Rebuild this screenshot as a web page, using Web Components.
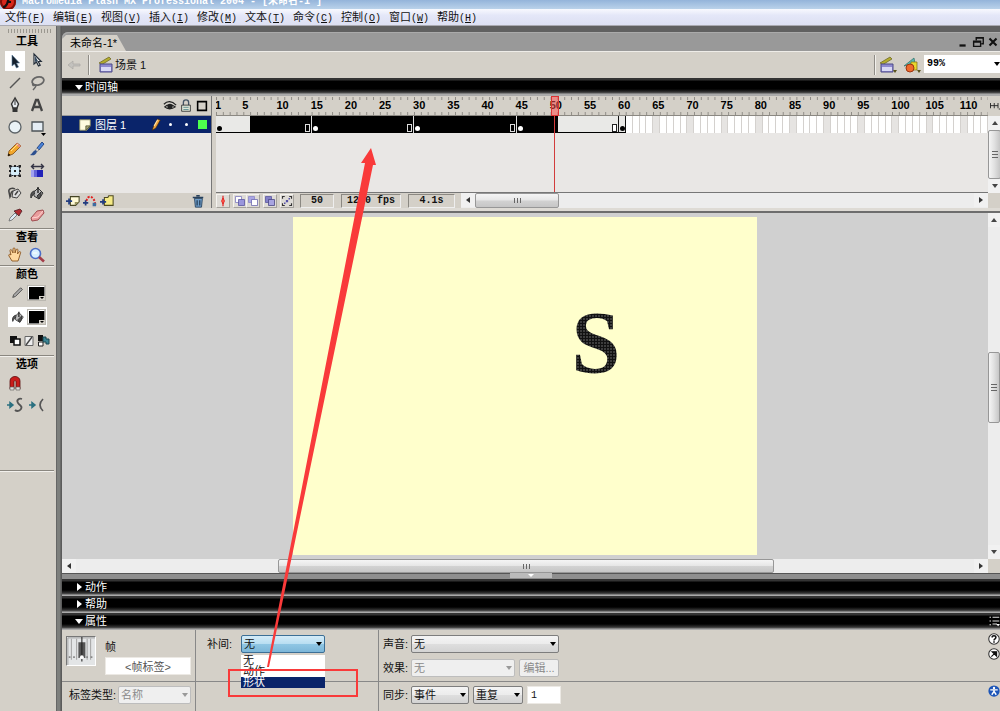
<!DOCTYPE html>
<html lang="zh-CN">
<head>
<meta charset="utf-8">
<title>Macromedia Flash MX Professional 2004</title>
<style>
html, body { margin: 0; height: 100%; overflow: hidden; }
body { font: 11px/16px "Liberation Sans", "Noto Sans CJK SC", sans-serif; color: #111; background: #5f5f5f; }
</style>
</head>
<body>
<flash-app></flash-app>
<script>
const define = (name, html, setup) => {
  const template = document.createElement('template');
  template.innerHTML = html;
  customElements.define(name, class extends HTMLElement {
    constructor() {
      super();
      this.attachShadow({ mode: 'open' }).append(template.content.cloneNode(true));
    }
    connectedCallback() {
      if (setup && !this.ready) { this.ready = true; setup(this, this.shadowRoot); }
    }
  });
};

/* Icons: every drawing sits in a 16 x 16 view box */
const icons = {
  logo: '<circle cx="8" cy="7" r="8" fill="#d8281c"/><circle cx="8" cy="7" r="7" fill="none" stroke="#801008" stroke-width="2"/><path d="M12 2C8 2 8 7 7 9S5 12 3 12M7 7h4" stroke="#111" stroke-width="2.2" fill="none"/>',
  arrow: '<path d="M5 2v11l2.500-2 2 4 2-1-2-4h3z" fill="#16202c" stroke="#55789a" stroke-width=".6"/>',
  subselect: '<path d="M5 1v10l2.500-2 2 4 1.700-.8-2-3.700h3z" fill="#fff" stroke="#222c38" stroke-width="1.200"/><path d="M6 3v6l3-1z" fill="#354b60"/>',
  line: '<path d="M3 13L13 3" stroke="#555" stroke-width="1.500"/>',
  lasso: '<ellipse cx="9" cy="6" rx="6" ry="4" transform="rotate(-15 9 6)" fill="none" stroke="#666" stroke-width="1.800"/><path d="M4 8c-1 2 0 3 2 2s1 2-2 5" fill="none" stroke="#666" stroke-width="1.500"/>',
  pen: '<path d="M8 1L4.500 7 6 11h4l1.500-4z" fill="#e8ecef" stroke="#333" stroke-width="1.400"/><path d="M8 3v5" stroke="#333"/><path d="M5.500 11h5v4h-5z" fill="#333"/>',
  text: '<path d="M3 14L7 3h2l4 11M5 10h6" fill="none" stroke="#444" stroke-width="2.300"/>',
  oval: '<circle cx="8" cy="8" r="6" fill="#e9f2f6" stroke="#5c6367" stroke-width="1.300"/>',
  rect: '<path d="M3 3h11v9H3z" fill="#e4edf4" stroke="#4c5357" stroke-width="1.300"/><path d="M12 14h5l-2.500 3z" fill="#000"/>',
  pencil: '<path d="M1 15l1-5 8-8 4 3-8 8z" fill="#f2a72c" stroke="#7a4a14" stroke-width=".8"/><path d="M10 2l4 3-1.500 1.500-4-3z" fill="#e78b84"/><path d="M4 10L11 3" stroke="#ffe08a"/><path d="M1 15l.5-2.500 2 1.500z" fill="#000"/>',
  brush: '<path d="M8 7l5-6 2 2-5 6z" fill="#4a83d8" stroke="#1e3f80" stroke-width=".9"/><path d="M8 7l2 2-2 1.500L6.500 9z" fill="#ddd" stroke="#555" stroke-width=".5"/><path d="M6.500 9L8 10.500C7 14 4 15 1 14c2-1 3-4 5.500-5z" fill="#2c4f8f"/>',
  transform: '<path d="M3.500 3.500h9v9h-9z" fill="#d4ecf8" stroke="#223" stroke-dasharray="2 1"/><path d="M2 2h2.500v2.500H2zM11.500 2H14v2.500h-2.500zM2 11.500h2.500V14H2zM11.500 11.500H14V14h-2.500zM7 2h2v2H7zM7 12h2v2H7zM2 7h2v2H2zM12 7h2v2h-2zM7 7h2v2H7z" fill="#222"/>',
  fillx: '<path d="M2 7h12v7H2z" fill="#2222b8"/><path d="M2 7h3v7H2z" fill="#a0a0f0"/><path d="M5 7h3v7H5z" fill="#6464d8"/><path d="M3 3.500h11M5 1L2.500 3.500 5 6M12 1l2.500 2.500L12 6" fill="none" stroke="#334" stroke-width="1.400"/>',
  ink: '<path d="M6 6l5-2 3 4-4 5-5-1z" fill="#ddd" stroke="#444"/><path d="M8 4c-3-2-7 0-6 3l1 5c1-2 0-5 3-6M8 10l3-4" fill="none" stroke="#444" stroke-width="1.500"/>',
  bucket: '<path d="M5 7l4-4 5 5-4 6-5-3z" fill="#bbb" stroke="#333"/><path d="M9 8V2" stroke="#222" stroke-width="1.400"/><path d="M6 6C3 6 1 9 2 13c1-2 2-4 4-5M8 11l4-4v4l-2 3z" fill="#555" stroke="#333"/>',
  dropper: '<path d="M2 14l1-3 5-5 2 2-5 5z" fill="#dcebf5" stroke="#666" stroke-width=".8"/><path d="M7 4l5 5 1-2 2-3-2-2-3 1z" fill="#b02c32" stroke="#4d2026" stroke-width=".8"/>',
  eraser: '<path d="M2 11l6-7 6-1 1 3-6 7-6 1z" fill="#e99c9c" stroke="#a04c50"/><path d="M3 11l6-1 5-6" fill="none" stroke="#ffd2cf"/>',
  hand: '<path d="M5 14L2 9c-1-2 1-2 2-1L3 4c0-2 1.500-2 2 0l1 2V2c0-1.500 2-1.500 2 0v4l1-3c.5-1.500 2-1 2 0l-.5 4 1.500-2c1-1 2 0 1.500 1L12 11l-1 3z" fill="#ffd9a0" stroke="#8a5520" stroke-width=".9"/>',
  zoom: '<circle cx="6.500" cy="6.500" r="5" fill="#d8f0ff" stroke="#4a6dc8" stroke-width="1.600"/><path d="M10 10l5 4.500" stroke="#a33c48" stroke-width="2.600"/><path d="M4 6h4" stroke="#fff"/>',
  stroke: '<path d="M2 13l1-3 8-8 2 2-8 8z" fill="#aaa" stroke="#444"/>',
  swap: '<path d="M3 3h7v7H3z" fill="#111"/><path d="M7 6h6v6H7z" fill="#fff" stroke="#111" stroke-width="1.500"/>',
  none: '<path d="M4 3.500h8v9H4z" fill="#eee" stroke="#666"/><path d="M5 12l6-8" stroke="#444" stroke-width="1.400"/>',
  exchange: '<path d="M3 2h5v6H3z" fill="#111"/><path d="M3.500 9H8v4H3.500z" fill="#fff" stroke="#222"/><path d="M8 4h3v2h3v5h-3V9H8z" fill="#3b8594" stroke="#1c4650"/>',
  magnet: '<path d="M3 14V6c0-6 10-6 10 0v8h-4V6.500c0-1-2-1-2 0V14z" fill="#c91c1c" stroke="#5a0d0d" stroke-width=".8"/><path d="M3 12h4v3H3zM9 12h4v3H9z" fill="#ddd" stroke="#555" stroke-width=".6"/>',
  smooth: '<path d="M0 8h5M3 5.500L6 8l-3 2.500z" stroke="#2b7080" fill="#2b7080" stroke-width="1.500"/><path d="M15 2c-3-1-6 1-4 4s5 3 3 6-5 2-6 1" fill="none" stroke="#555" stroke-width="1.800"/>',
  straight: '<path d="M0 8h5M3 5.500L6 8l-3 2.500z" stroke="#2b7080" fill="#2b7080" stroke-width="1.500"/><path d="M14 2C10 6 10 10 14 14" fill="none" stroke="#555" stroke-width="1.700"/>',
  back: '<path d="M2 8l5-4v3h7v2H7v3z" fill="#c4c2be" stroke="#aaa8a4" stroke-width=".7"/>',
  clapper: '<path d="M1 6L11 0l2 2L4 7.500z" fill="#b3ac2e" stroke="#66601c" stroke-width=".7"/><path d="M2 7h12v8H2z" fill="#8f8ad0" stroke="#4c4a88"/><path d="M3 10h10v4H3z" fill="#d9d9f5"/>',
  symbols: '<path d="M1 9L11 1l1 5z" fill="#58b8b0" stroke="#2f6f68" stroke-width=".7"/><path d="M8 5h6v8H8z" fill="#e8d72e" stroke="#7b6d12" stroke-width=".7"/><circle cx="7" cy="11" r="4" fill="#ee6a2c" stroke="#9c3410"/>',
  eye: '<path d="M1 6c4-4 9-4 14 1M2 9c3-3 8-3 12 0-4 3-9 3-12 0z" fill="none" stroke="#222" stroke-width="1.400"/><circle cx="8" cy="8.500" r="3" fill="#222"/>',
  lock: '<path d="M5 8V4c0-4 6-4 6 0v4" fill="none" stroke="#456" stroke-width="1.500"/><path d="M3 7h10v7H3z" fill="#dfe7d8" stroke="#333"/><path d="M5 9.500h6M5 12h6" stroke="#5c8b8d"/>',
  outline: '<path d="M3 3h10v10H3z" fill="none" stroke="#000" stroke-width="1.800"/>',
  page: '<path d="M2 2h12v7l-4 5H2z" fill="#fffbe0" stroke="#8b8b60"/><path d="M9 14V9h5z" fill="#a9a77c" stroke="#555530"/>',
  edit: '<path d="M5 14l1-4 5-9 3 1.500-5 9z" fill="#efa33b" stroke="#40280e" stroke-width=".8"/><path d="M7 9l4-7" stroke="#ffe9b5" stroke-width="1.200"/>',
  addlayer: '<path d="M5 3h10v6l-4 4H5z" fill="#fffbd8" stroke="#444424" stroke-width="1.200"/><path d="M10 13V9h5z" fill="#999560"/><path d="M0 8h7M3.500 5v7" stroke="#223c80" stroke-width="2"/>',
  guide: '<path d="M4 8c1-8 9-6 10 4" fill="none" stroke="#e02020" stroke-width="2.300" stroke-dasharray="2.500 1.500"/><path d="M0 10h6M3 7v6" stroke="#223c80" stroke-width="2"/><path d="M11 10h4v4h-4z" fill="#3c6ca0"/>',
  folder: '<path d="M5 4h4l1-2h5v11H5z" fill="#f5ea86" stroke="#4e4a20" stroke-width="1.200"/><path d="M0 9h7M3.500 6v6" stroke="#223c80" stroke-width="2"/>',
  trash: '<path d="M4 5h9l-1 10H5z" fill="#6d9cc8" stroke="#28415c"/><path d="M2 4h12M6 2h4M7 7v6M10 7v6" stroke="#28415c" stroke-width="1.500"/>',
  center: '<path d="M8 1v14" stroke="#dd1616" stroke-width="1.500"/><path d="M8 4l2 4-2 4-2-4z" fill="#ff5a4e" stroke="#dd1616"/>',
  onion: '<path d="M2 2h8v8H2z" fill="#fff" stroke="#7772bb"/><path d="M6 6h8v8H6z" fill="#9a96dc" stroke="#55519c"/>',
  onionout: '<path d="M2 2h8v8H2z" fill="#aaa6e4" stroke="#8884c4"/><path d="M6 6h8v8H6z" fill="#fff" stroke="#6662ac"/>',
  multi: '<path d="M2 2h8v8H2z" fill="#8480c8" stroke="#55519c"/><path d="M6 6h8v8H6z" fill="#a8a4e0" stroke="#44407e"/>',
  markers: '<path d="M5 2H2v3M2 11v3h3M11 2h3v3M14 11v3h-3" fill="none" stroke="#333" stroke-width="1.500"/><path d="M6.500 6.500h3v3h-3zM10 4h2v2h-2zM4 10h2v2H4z" fill="#5551a8"/>',
  min: '<path d="M4 12h7" stroke="#111" stroke-width="2.600"/>',
  restore: '<path d="M6 6V3h8v7h-2M6 3.500h8M3 7h8v6H3zM3 8h8" fill="none" stroke="#111" stroke-width="1.600"/>',
  close: '<path d="M4 4l8 8M12 4l-8 8" stroke="#111" stroke-width="2.400"/>',
  view: '<path d="M2 4v7M7 4v7M12 4v7M2 7.500h10M13 12h3" stroke="#222" stroke-width="1.200"/>',
  menu: '<path d="M2 3h2M2 8h2M2 13h2M6 3h9M6 8h9M6 12h6" stroke="#ddd" stroke-width="1.600"/><path d="M11 12h5l-2.500 3z" fill="#fff"/>',
  help: '<circle cx="8" cy="8" r="7" fill="#fff" stroke="#333" stroke-width="1.400"/><path d="M5.500 6c0-3 5-3 5 0 0 2-2.500 1.500-2.500 4M8 11v2" fill="none" stroke="#111" stroke-width="2"/>',
  launch: '<circle cx="8" cy="8" r="7" fill="#fff" stroke="#333" stroke-width="1.400"/><path d="M4.500 11.500l5-5M5.500 5h6v6z" fill="#111" stroke="#111" stroke-width="1.500"/>',
  access: '<circle cx="8" cy="8" r="7.500" fill="#1c55b8"/><circle cx="8" cy="4" r="1.600" fill="#fff"/><path d="M3 6.500h10M8 6v3M8 8.500L5 13M8 8.500l3 4.500" stroke="#fff" stroke-width="1.900"/>',
  frame: '<path d="M0 0h16v16H0z" fill="#e3e5e6"/><path d="M.5 16V.5H16M2.500 1v12M5.500 1v12M11.500 1v12M13.500 1v12" fill="none" stroke="#999" stroke-width=".5"/><path d="M6.500 3h4v9h-4z" fill="#555"/><path d="M8.500 0v14" stroke="#222" stroke-width=".6"/><circle cx="8.500" cy="11.500" r="1.100" fill="#fff"/><path d="M1 11.500h5M11 11.500h5" stroke="#888" stroke-dasharray="1 1.500"/>'
};
define('flash-icon', `<style>
  :host { display: block; width: 16px; height: 16px; flex: none; }
  :host([small]) { width: 14px; height: 14px; }
  :host([tiny]) { width: 12px; height: 12px; }
  svg { display: block; width: 100%; height: 100%; overflow: visible; }
</style><svg viewBox="0 0 16 16" aria-hidden="true"></svg>`,
(el, root) => { root.querySelector('svg').innerHTML = icons[el.getAttribute('name')] || ''; });

define('icon-button', `<style>
  :host { display: block; }
  button { display: grid; place-items: center; box-sizing: border-box; width: 100%; height: 100%; margin: 0; padding: 0; border: 0; background: none; }
  :host([selected]) button { background: #fff; }
  :host([raised]) { width: 14px; height: 14px; }
  :host([raised]) button { background: #dedbd6; border: 1px solid; border-color: #f5f3ef #a5a29c #a5a29c #f5f3ef; }
</style><button type="button"><slot></slot></button>`,
(el, root) => root.querySelector('button').setAttribute('aria-label', el.getAttribute('label') || ''));

define('title-bar', `<style>
  :host { display: flex; align-items: flex-start; gap: 6px; height: 9px; overflow: hidden; background: linear-gradient(#94b4da, #bad2ea); color: #fff; font: bold 10px/10px "Liberation Mono", "Noto Sans CJK SC", monospace; white-space: pre; }
  .text { margin-top: -3px; }
  flash-icon { margin-top: -5px; }
</style><flash-icon name="logo"></flash-icon><span class="text"><slot></slot></span>`);

define('menu-bar', `<style>
  :host { display: flex; height: 16px; padding-left: 1px; background: linear-gradient(#f8f9fe, #e4e7f8 40%, #dde0f2); border-bottom: 1px solid #a9a9b0; }
  button { width: 48px; padding: 0 0 0 4px; border: 0; background: none; text-align: left; color: #111; font: 11px/16px "Liberation Sans", "Noto Sans CJK SC", sans-serif; white-space: nowrap; }
  span { font: 10px/16px "Liberation Mono", monospace; }
</style>`,
(el, root) => {
  for (const entry of '文件F 编辑E 视图V 插入I 修改M 文本T 命令C 控制O 窗口W 帮助H'.split(' ')) {
    const b = document.createElement('button');
    b.innerHTML = `${entry.slice(0, 2)}<span>(<u>${entry[2]}</u>)</span>`;
    root.append(b);
  }
});

define('color-well', `<style>
  :host { display: grid; grid-template-columns: 20px 18px; height: 20px; width: 39px; margin-left: 8px; align-items: center; }
  :host([selected]) { background: #fff; }
  flash-icon { justify-self: center; }
  button { position: relative; box-sizing: border-box; width: 17px; height: 14px; padding: 0; background: #000; border: 1px solid; border-color: #fff #888 #888 #fff; outline: 1px solid #bbb8b0; }
  button::after { content: ""; position: absolute; right: 0; bottom: 0; border: 2px solid #d4d0c8; border-top-color: #000; border-bottom-width: 0; box-shadow: 0 0 0 1px #d4d0c8; }
</style><flash-icon small></flash-icon><button type="button"></button>`,
(el, root) => {
  const icon = document.createElement('flash-icon');
  icon.setAttribute('small', '');
  icon.setAttribute('name', el.getAttribute('icon'));
  root.querySelector('flash-icon').replaceWith(icon);
  root.querySelector('button').setAttribute('aria-label', el.getAttribute('label'));
});

define('tool-section', `<style>
  :host { display: block; border-top: 1px solid #8a8780; box-shadow: inset 0 1px #f2f0ec; padding-top: 1px; }
  :host([first]) { border: 0; box-shadow: none; padding: 0; }
  h2 { margin: 0; text-align: center; font: bold 11px/15px "Liberation Sans", "Noto Sans CJK SC", sans-serif; color: #000; }
</style><h2></h2><slot></slot>`,
(el, root) => root.querySelector('h2').textContent = el.getAttribute('heading'));

define('tool-panel', `<style>
  :host { display: block; box-sizing: border-box; width: 56px; flex: none; padding: 3px 2px 0 0; background: #d4d0c8; }
  .grip { height: 4px; margin: 0 3px 1px 7px; background: radial-gradient(#9a978f 1px, transparent 1px) 0 0 / 3px 2px; }
  .grid { display: grid; grid-template-columns: 20px 20px; grid-auto-rows: 20px; column-gap: 2px; row-gap: 2px; margin-left: 5px; }
  .tools { padding-top: 2px; padding-bottom: 3px; }
  .wells { display: grid; gap: 4px; padding-top: 1px; padding-bottom: 4px; }
  .mini { display: grid; grid-template-columns: repeat(3, 14px); height: 20px; margin-left: 7px; }
  .options { padding-bottom: 55px; padding-top: 1px; }
  .end { border-top: 1px solid #8a8780; border-bottom: 1px solid #f2f0ec; }
</style>
<div class="grip"></div>
<tool-section first heading="工具"><div class="grid tools"></div></tool-section>
<tool-section heading="查看"><div class="grid">
  <icon-button label="手形"><flash-icon name="hand"></flash-icon></icon-button>
  <icon-button label="缩放"><flash-icon name="zoom"></flash-icon></icon-button></div></tool-section>
<tool-section heading="颜色"><div class="wells">
  <color-well icon="stroke" label="笔触颜色"></color-well>
  <color-well icon="bucket" label="填充颜色" selected></color-well>
  <div class="mini">
    <icon-button label="黑白"><flash-icon name="swap"></flash-icon></icon-button>
    <icon-button label="没有颜色"><flash-icon name="none"></flash-icon></icon-button>
    <icon-button label="交换颜色"><flash-icon name="exchange"></flash-icon></icon-button>
  </div></div></tool-section>
<tool-section heading="选项"><div class="grid options">
  <icon-button label="贴紧"><flash-icon name="magnet"></flash-icon></icon-button><span></span>
  <icon-button label="平滑"><flash-icon name="smooth"></flash-icon></icon-button>
  <icon-button label="伸直"><flash-icon name="straight"></flash-icon></icon-button></div></tool-section>
<div class="end"></div>`,
(el, root) => {
  root.querySelector('.tools').innerHTML =
    'arrow subselect line lasso pen text oval rect pencil brush transform fillx ink bucket dropper eraser'.split(' ')
      .map((n, i) => `<icon-button label="${n}"${i ? '' : ' selected'}><flash-icon name="${n}"></flash-icon></icon-button>`).join('');
});

define('doc-tabs', `<style>
  :host { display: flex; align-items: flex-end; height: 19px; background: #999; border-radius: 6px 0 0 0; box-shadow: inset 1px 1px #aaa; }
  .tab { flex: none; width: 56px; height: 16px; padding: 0 0 0 8px; box-sizing: content-box; border: 0; background: #d4d0c8; clip-path: polygon(0 4px, 4px 0, 55px 0, 64px 100%, 0 100%); text-align: left; font: 11px/16px "Liberation Sans", "Noto Sans CJK SC", sans-serif; white-space: nowrap; }
  .controls { display: flex; gap: 1px; margin: 0 0 2px auto; }
</style><button class="tab">未命名-1*</button>
<div class="controls"><icon-button label="最小化"><flash-icon small name="min"></flash-icon></icon-button><icon-button label="还原"><flash-icon small name="restore"></flash-icon></icon-button><icon-button label="关闭"><flash-icon small name="close"></flash-icon></icon-button></div>`);

define('drop-down', `<style>
  :host { display: flex; align-items: center; position: relative; }
  .box { position: relative; flex: 1; min-width: 0; }
  select { display: block; box-sizing: border-box; width: 100%; height: 18px; margin: 0; padding: 0 2px; appearance: none; border: 1px solid #7d7d7d; border-radius: 2px; background: linear-gradient(#f4f4f4, #ececec 48%, #dedede 52%, #d3d3d3); color: #111; font: 11px/16px "Liberation Sans", "Noto Sans CJK SC", sans-serif; opacity: 1; }
  .box::after { content: ""; position: absolute; right: 3px; top: 7px; border: 3px solid transparent; border-top: 4px solid #000; border-bottom: 0; pointer-events: none; }
  :host([open]) select { border-color: #3c6f96; background: linear-gradient(#d5ecf8, #b8def2 48%, #8fc6e4 52%, #7cb6d8); }
  :host([disabled]) select { border-color: #bdbdbd; background: #efefef; color: #8a8a8a; }
  :host([disabled]) .box::after { border-top-color: #999; }
  :host([plain]) select { border-color: #fff; background: #fff; font: bold 10px/16px "Liberation Mono", monospace; border-radius: 0; color: #000; }
  :host([plain]) .box::after { right: 0; }
</style><div class="box"><select></select></div><slot></slot>`,
(el, root) => {
  const s = root.querySelector('select');
  s.disabled = el.hasAttribute('disabled');
  s.setAttribute('aria-label', el.getAttribute('name') || '');
  for (const o of el.getAttribute('options').split(',')) s.add(new Option(o));
});

define('scene-bar', `<style>
  :host { display: flex; align-items: center; height: 26px; padding-left: 4px; background: #d4d0c8; border-top: 1px solid #eeece8; }
  .rule { width: 1px; height: 20px; margin: 0 9px 0 6px; background: #8f8c86; box-shadow: 1px 0 #f2f0ec; }
  .scene { margin-left: 1px; }
  .right { display: flex; align-items: center; margin-left: auto; gap: 8px; }
  .right .rule { margin: 0 -4px 0 0; }
  .pick { position: relative; }
  .pick::after { content: ""; position: absolute; right: -2px; bottom: 0; border: 2px solid transparent; border-top: 3px solid #5a531b; border-bottom: 0; }
  drop-down { width: 76px; margin-left: -3px; margin-bottom: 2px; }
</style>
<icon-button label="返回"><flash-icon name="back"></flash-icon></icon-button><div class="rule"></div>
<flash-icon name="clapper"></flash-icon><span class="scene">场景 1</span>
<div class="right"><div class="rule"></div><icon-button class="pick" label="编辑场景"><flash-icon name="clapper"></flash-icon></icon-button>
<icon-button class="pick" label="编辑元件"><flash-icon name="symbols"></flash-icon></icon-button>
<drop-down plain name="显示比例" options="99%"></drop-down></div>`);

define('panel-header', `<style>
  :host { display: flex; align-items: center; box-sizing: border-box; height: 17px; padding: 0 0 1px 13px; background: linear-gradient(#333 0, #333 2px, #000 3px, #000 11px, #333 14px, #555 15px, #aaa 16px); color: #fff; }
  :host([tall]) { height: 18px; padding-bottom: 0; }
  button { display: flex; align-items: center; gap: 2px; padding: 0; border: 0; background: none; color: #fff; font: 11px/16px "Liberation Sans", "Noto Sans CJK SC", sans-serif; }
  i { border: 4px solid transparent; border-left: 5px solid #fff; border-right: 0; margin-left: 2px; margin-right: 1px; }
  :host([open]) i { border: 4px solid transparent; border-top: 5px solid #fff; border-bottom: 0; margin-left: 0; margin-right: 0; }
  slot { display: block; margin-left: auto; }
</style><button type="button"><i></i><span></span></button><slot></slot>`,
(el, root) => root.querySelector('span').textContent = el.getAttribute('heading'));

define('scroll-bar', `<style>
  :host { display: flex; min-width: 0; min-height: 0; background: #ededed; }
  :host([vertical]) { flex-direction: column; }
  button { flex: none; display: grid; place-items: center; width: 14px; height: 14px; padding: 0; border: 0; background: #f1f1f1; }
  :host([vertical]) button { width: 100%; }
  button::before { content: ""; border: 3px solid transparent; border-left: 4px solid #333; border-right: 0; }
  button.back::before { transform: rotate(180deg); }
  :host([vertical]) button::before { border: 3px solid transparent; border-top: 4px solid #444; border-bottom: 0; }
  .thumb { display: grid; place-items: center; box-sizing: border-box; border: 1px solid #979797; border-radius: 2px; background: linear-gradient(#f5f5f5, #e6e6e6 48%, #d2d2d2 52%, #c6c6c6); }
  :host([vertical]) .thumb { background: linear-gradient(90deg, #f5f5f5, #e0e0e0 50%, #c6c6c6); }
  .thumb::before { content: ""; width: 7px; height: 5px; background: repeating-linear-gradient(90deg, #666 0 1px, transparent 1px 3px); }
  :host([vertical]) .thumb::before { width: 6px; height: 7px; background: repeating-linear-gradient(#666 0 1px, transparent 1px 3px); }
</style><button class="back" aria-label="后退"></button><div class="pre"></div><div class="thumb"></div><div class="post"></div><button aria-label="前进"></button>`,
(el, root) => {
  const parts = el.getAttribute('parts').split(' ');
  ['pre', 'thumb', 'post'].forEach((c, i) => root.querySelector('.' + c).style.flex = parts[i] + ' 1 0');
});

define('layer-list', `<style>
  :host { display: grid; grid-template-rows: 20px 17px 1fr 15px; background: #e9e7e5; border-right: 1px solid #777; }
  .head, .foot { display: flex; align-items: center; background: #d4d0c8; }
  .head { justify-content: flex-end; gap: 2px; padding-right: 2px; border-bottom: 1px solid #999; }
  .layer { display: flex; align-items: center; background: #0a246a; color: #fff; padding: 0 4px 0 16px; }
  .layer .name { flex: 1; margin-left: 3px; }
  .dot { width: 3px; height: 3px; border-radius: 2px; background: #fff; margin-left: 7px; margin-right: 6px; }
  .chip { width: 9px; height: 9px; margin-left: 4px; background: #4dff4d; }
  .foot { gap: 3px; padding: 0 6px 0 4px; }
  .foot :last-child { margin-left: auto; }
</style>
<div class="head"><flash-icon small name="eye"></flash-icon><flash-icon small name="lock"></flash-icon><flash-icon small name="outline"></flash-icon></div>
<div class="layer"><flash-icon small name="page"></flash-icon><span class="name">图层 1</span><flash-icon small name="edit"></flash-icon><span class="dot"></span><span class="dot"></span><span class="chip"></span></div>
<div></div>
<div class="foot"><icon-button label="插入图层"><flash-icon small name="addlayer"></flash-icon></icon-button><icon-button label="添加引导层"><flash-icon small name="guide"></flash-icon></icon-button><icon-button label="插入文件夹"><flash-icon small name="folder"></flash-icon></icon-button><icon-button label="删除图层"><flash-icon small name="trash"></flash-icon></icon-button></div>`);

/* Ruler and frames share a grid of 113 equal frame columns */
define('frame-grid', `<style>
  :host { display: grid; grid-template-rows: 20px 17px 1fr; position: relative; min-width: 0; overflow: hidden; background: #e9e7e5; }
  .cols { display: grid; grid-template-columns: repeat(113, minmax(0, 1fr)); grid-auto-flow: column; }
  .ruler { border-bottom: 1px solid #8b8882; background: linear-gradient(90deg, #8f8c86 1px, transparent 1px) 0 1px / calc(100% / 113) 3px repeat-x, linear-gradient(90deg, #8f8c86 1px, transparent 1px) 0 100% / calc(100% / 113) 3px repeat-x, #d4d0c8; }
  .ruler span { grid-row: 1; margin-left: -1px; width: 20px; font: bold 11px/19px "Liberation Sans", sans-serif; color: #000; }
  .cell { background: #fff; border-right: 1px solid #d4d1ce; grid-row: 1; }
  .cell.five { background: #e6e4e2; }
  .span { position: relative; grid-row: 1; background: #e9e9e7; border-bottom: 1px solid #000; }
  .black { background: #000; }
  .key::before { content: ""; position: absolute; left: 1px; bottom: 1px; width: 5px; height: 5px; border-radius: 3px; background: #000; }
  .black.key::before { background: #fff; }
  .edge { box-shadow: -1px 0 #ddd; }
  .end::after { content: ""; position: absolute; right: 2px; bottom: 0; width: 3px; height: 6px; border: 1px solid #ddd; }
  .light.end::after { border-color: #222; background: #fff; }
  .last { box-shadow: -1px 0 #111, inset -1px 0 #111; }
  .playhead { position: absolute; inset: 0; pointer-events: none; grid-template-rows: 20px 1fr; }
  .playhead b { grid-column: 50; grid-row: 1; margin-right: -1px; border: 1px solid #d33; background: #ff505088; box-sizing: border-box; }
  .playhead i { grid-column: 50; grid-row: 2; margin-left: 3px; width: 1px; background: #d23c3c; }
</style><div class="cols ruler"></div><div class="cols frames"></div><div></div><div class="cols playhead"><b></b><i></i></div>`,
(el, root) => {
  const ruler = root.querySelector('.ruler'), frames = root.querySelector('.frames');
  for (const n of [1, ...Array.from({ length: 22 }, (_, i) => (i + 1) * 5)])
    ruler.insertAdjacentHTML('beforeend', `<span style="grid-column:${n}">${n}</span>`);
  const spans = [[1, 6, 'key'], [6, 15, 'black end'], [15, 30, 'black key end edge'], [30, 45, 'black key end edge'],
    [45, 51, 'black key edge'], [51, 60, 'light end'], [60, 61, 'key last']];
  for (const [a, b, c] of spans)
    frames.insertAdjacentHTML('beforeend', `<div class="span ${c}" style="grid-column:${a}/${b}"></div>`);
  for (let n = 61; n <= 113; n++)
    frames.insertAdjacentHTML('beforeend', `<div class="cell${n % 5 ? '' : ' five'}" style="grid-column:${n}"></div>`);
});

define('time-line', `<style>
  :host { display: grid; grid-template-columns: 150px minmax(0, 1fr) 12px; grid-template-rows: 97px 15px; background: #d4d0c8; border-bottom: 3px solid #dedbd5; box-shadow: 0 2px #6d6d6d; margin-bottom: 2px; }
  layer-list { grid-row: 1 / 3; }
  frame-grid { margin-left: 4px; border-bottom: 1px solid #777; }
  .side { display: grid; grid-template-rows: 20px 1fr; }
  .side > flash-icon { margin: 4px 0 0 1px; }
  .foot { grid-column: 2 / 3; display: flex; align-items: center; padding-left: 4px; }
  .foot icon-button { margin-right: -1px; }
  .foot .gap { margin-left: 4px; }
  output { box-sizing: border-box; height: 14px; margin-left: 7px; border: 1px solid; border-color: #8b8882 #eee #eee #8b8882; text-align: center; font: bold 10px/12px "Liberation Mono", monospace; color: #111; white-space: pre; }
  .a { width: 34px; } .b { width: 60px; } .c { width: 47px; }
  .foot scroll-bar { flex: 1; align-self: stretch; margin-left: 6px; }
</style>
<layer-list></layer-list><frame-grid></frame-grid>
<div class="side"><flash-icon tiny name="view"></flash-icon><scroll-bar vertical parts="0 1 0"></scroll-bar></div>
<div class="foot"><icon-button raised label="滚动到播放头"><flash-icon tiny name="center"></flash-icon></icon-button>
<icon-button class="gap" raised label="绘图纸外观"><flash-icon tiny name="onion"></flash-icon></icon-button><icon-button raised label="绘图纸外观轮廓"><flash-icon tiny name="onionout"></flash-icon></icon-button>
<icon-button class="gap" raised label="编辑多个帧"><flash-icon tiny name="multi"></flash-icon></icon-button>
<icon-button class="gap" raised label="修改绘图纸标记"><flash-icon tiny name="markers"></flash-icon></icon-button>
<output class="a">50</output><output class="b">12.0 fps</output><output class="c">4.1s</output>
<scroll-bar parts="0 82 415"></scroll-bar></div>`);

define('stage-area', `<style>
  :host { display: grid; grid-template-columns: minmax(0, 1fr) 12px; grid-template-rows: minmax(0, 1fr) 14px; background: #d4d0c8; }
  .paste { display: grid; place-items: center; background: #d0d0d0; overflow: hidden; }
  .canvas { position: relative; width: 464px; height: 338px; background: #ffffcc; }
  .glyph { position: absolute; left: 60%; top: 22%; padding-top: 2px; font: bold 88px/100px "Liberation Serif", serif; color: transparent; background: radial-gradient(circle at 1px 1px, #a5a5a5 0, #111 1px) 0 0 / 3px 3px; -webkit-background-clip: text; background-clip: text; }
</style><div class="paste"><div class="canvas"><span class="glyph">S</span></div></div>
<scroll-bar vertical parts="125 68 122"></scroll-bar><scroll-bar parts="202 494 200"></scroll-bar>`);

define('splitter-bar', `<style>
  :host { display: flex; justify-content: center; height: 6px; background: linear-gradient(#555 1px, #8e8e8e 1px); }
  button { display: grid; place-items: center; width: 42px; height: 5px; padding: 0; border: 0; background: #bbb; }
  button::before { content: ""; border: 3px solid transparent; border-top: 3px solid #fff; border-bottom: 0; }
</style><button aria-label="折叠面板"></button>`);

define('option-list', `<style>
  :host { display: block; background: #fff; }
  ul { margin: 0; padding: 0; list-style: none; }
  li { height: 11px; padding-left: 2px; font: 11px/11px "Liberation Sans", "Noto Sans CJK SC", sans-serif; }
  li[aria-selected=true] { background: #0a246a; color: #fff; }
</style><ul role="listbox" aria-label="补间"><li role="option">无</li><li role="option">动作</li><li role="option" aria-selected="true">形状</li></ul>`);

define('property-panel', `<style>
  :host { display: grid; grid-template-columns: 134px 183px minmax(0, 1fr) 12px; grid-template-rows: 51px 30px; background: #d4d0c8; }
  .cell { display: flex; flex-direction: column; gap: 6px; box-sizing: border-box; min-width: 0; padding: 5px 4px 0; border-right: 1px solid #888; }
  .cell.low { border-top: 1px solid #888; padding-top: 4px; }
  .cell.open { border-right: 0; }
  .cell.icons { padding: 3px 0 0; gap: 3px; }
  .frame { flex-direction: row; gap: 9px; }
  .frame flash-icon { width: 30px; height: 30px; margin-top: 1px; border: 1px solid; border-color: #777 #fff #fff #777; box-sizing: border-box; }
  .frame div { flex: 1; display: grid; gap: 2px; margin-top: 4px; align-content: start; }
  .row { display: flex; gap: 4px; }
  input, .edit { box-sizing: border-box; height: 18px; margin: 0; padding: 0 3px; border: 1px solid #ece9e4; background: #fff; font: 11px/16px "Liberation Sans", "Noto Sans CJK SC", sans-serif; color: #111; min-width: 0; }
  .name { width: 86px; text-align: center; color: #555; }
  .loop { width: 34px; font: 10px/16px "Liberation Mono", monospace; }
  .edit { width: 40px; border: 1px solid #b8b8b8; border-radius: 2px; background: #efefef; color: #8a8a8a; white-space: nowrap; }
  .lab { width: 24px; line-height: 18px; flex: none; white-space: nowrap; }
  .lab.type { width: 48px; margin-left: 3px; margin-right: -3px; }
  .lab.t { width: 30px; margin-left: 7px; }
  .w84 { width: 84px; } .w148 { width: 148px; } .w104 { width: 104px; } .w58 { width: 58px; } .w50 { width: 50px; } .w74 { width: 74px; }
  option-list { position: absolute; left: 0; top: 20px; width: 84px; z-index: 1; }
</style>
<div class="cell frame"><flash-icon name="frame"></flash-icon><div><label for="fl">帧</label><input id="fl" class="name" value="&lt;帧标签&gt;"></div></div>
<div class="cell"><div class="row"><span class="lab t">补间:</span><drop-down class="w84" open name="补间" options="无,动作,形状"><option-list></option-list></drop-down></div></div>
<div class="cell open"><div class="row"><span class="lab">声音:</span><drop-down class="w148" name="声音" options="无"></drop-down></div>
<div class="row"><span class="lab">效果:</span><drop-down class="w104" disabled name="效果" options="无"></drop-down><button class="edit" disabled>编辑...</button></div></div>
<div class="cell open icons"><icon-button label="帮助"><flash-icon tiny name="help"></flash-icon></icon-button><icon-button label="编辑"><flash-icon tiny name="launch"></flash-icon></icon-button></div>
<div class="cell low"><div class="row"><span class="lab type">标签类型:</span><drop-down class="w74" disabled name="标签类型" options="名称"></drop-down></div></div>
<div class="cell low"></div>
<div class="cell low open"><div class="row"><span class="lab">同步:</span><drop-down class="w58" name="同步" options="事件"></drop-down><drop-down class="w50" name="循环" options="重复"></drop-down><input class="loop" aria-label="循环次数" value="1"></div></div>
<div class="cell low open icons"><icon-button label="辅助功能"><flash-icon tiny name="access"></flash-icon></icon-button></div>`);

/* Red marker strokes drawn over the workspace */
define('markup-layer', `<style>
  :host { display: block; position: absolute; inset: 0; overflow: hidden; pointer-events: none; z-index: 5; }
  svg { display: block; width: 100%; height: 100%; }
</style><svg aria-hidden="true"><path d="M371 148L361 163L365 163L267 667L269 667L373 165L376 165Z" fill="#f93a3a"/><rect x="229" y="670" width="128" height="26" fill="none" stroke="#f93a3a" stroke-width="2"/></svg>`);

define('flash-app', `<style>
  :host { display: flex; flex-direction: column; position: relative; height: 100vh; overflow: hidden; }
  .body { flex: 1; display: flex; min-height: 0; }
  main { flex: 1; min-width: 0; display: flex; flex-direction: column; padding: 6px 0 0 6px; background: linear-gradient(90deg, #666 1px, #7d7f7d 1px, #7d7f7d 4px, #555 5px, #606060 6px); }
  stage-area { flex: 1; min-height: 0; }
</style>
<title-bar>Macromedia Flash MX Professional 2004 - [未命名-1*]</title-bar>
<menu-bar></menu-bar>
<div class="body"><tool-panel></tool-panel>
<main>
  <doc-tabs></doc-tabs>
  <scene-bar></scene-bar>
  <panel-header tall open heading="时间轴"></panel-header>
  <time-line></time-line>
  <stage-area></stage-area>
  <splitter-bar></splitter-bar>
  <panel-header heading="动作"></panel-header>
  <panel-header heading="帮助"></panel-header>
  <panel-header open heading="属性"><flash-icon tiny name="menu"></flash-icon></panel-header>
  <property-panel></property-panel>
</main></div>
<markup-layer></markup-layer>`);
</script>
</body>
</html>
